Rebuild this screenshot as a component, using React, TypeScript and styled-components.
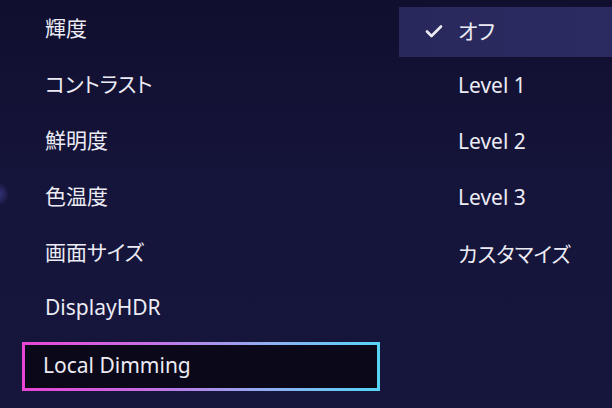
import React from "react";
import styled, { createGlobalStyle } from "styled-components";

const Global = createGlobalStyle`
  html, body { margin: 0; padding: 0; background: #141236; }
  body { font-family: "Noto Sans", "Noto Sans CJK JP", sans-serif; }
`;

const Screen = styled.div`
  position: relative;
  width: 612px;
  height: 408px;
  overflow: hidden;
  display: flex;
  background: linear-gradient(180deg, #110f2f 0%, #15143a 45%, #16153b 100%);
  color: #ecebf4;
  font-size: 21px;
  font-feature-settings: "palt";
`;

const EdgeGlow = styled.div`
  position: absolute;
  left: -12px;
  top: 182px;
  width: 20px;
  height: 24px;
  border-radius: 50%;
  background: radial-gradient(circle, rgba(70, 70, 160, 0.7) 0%, rgba(40, 40, 110, 0) 75%);
`;

const MenuColumn = styled.ul`
  list-style: none;
  margin: 0;
  padding: 0;
  width: 399px;
  display: flex;
  flex-direction: column;
`;

const MenuRow = styled.li`
  height: 56px;
  display: flex;
  align-items: center;
  padding-left: 45px;
  padding-bottom: 2px;
  box-sizing: border-box;
  white-space: nowrap;
`;

const FocusRow = styled.li`
  margin: 6px 0 0 22px;
  width: 358px;
  height: 49px;
  box-sizing: border-box;
  display: flex;
  align-items: center;
  padding: 0 0 3px 18px;
  border: 3px solid;
  border-image: linear-gradient(90deg, #ea46d6 0%, #c770e4 35%, #8fb0f2 70%, #55d4f6 100%) 1;
  background: #0a0819;
  white-space: nowrap;
`;

const OptionColumn = styled.ul`
  list-style: none;
  margin: 0;
  padding: 7px 0 0;
  flex: 1;
  display: flex;
  flex-direction: column;
`;

const OptionRow = styled.li<{ $selected?: boolean }>`
  height: ${(p) => (p.$selected ? "50px" : "56px")};
  display: grid;
  grid-template-columns: 59px 1fr;
  align-items: center;
  background: ${(p) => (p.$selected ? "linear-gradient(90deg, #28285c, #2b2b62)" : "transparent")};
  white-space: nowrap;
  padding-bottom: ${(p) => (p.$selected ? "4px" : "0")};
  box-sizing: border-box;
`;

const CheckSlot = styled.span`
  display: flex;
  justify-content: flex-end;
  padding-right: 15px;
  padding-top: 2px;
`;

const Check = () => (
  <svg width="18" height="14" viewBox="0 0 18 14" fill="none">
    <path d="M2 7.5 L6.5 12 L16 2.5" stroke="#ecebf4" strokeWidth="2.6" strokeLinecap="round" strokeLinejoin="round" />
  </svg>
);

const menu = ["輝度", "コントラスト", "鮮明度", "色温度", "画面サイズ", "DisplayHDR"];
const options = ["Level 1", "Level 2", "Level 3", "カスタマイズ"];

export default function App() {
  return (
    <>
      <Global />
      <Screen>
        <EdgeGlow />
        <MenuColumn>
          {menu.map((m) => (
            <MenuRow key={m}>{m}</MenuRow>
          ))}
          <FocusRow>Local Dimming</FocusRow>
        </MenuColumn>
        <OptionColumn>
          <OptionRow $selected>
            <CheckSlot>
              <Check />
            </CheckSlot>
            <span>オフ</span>
          </OptionRow>
          {options.map((o) => (
            <OptionRow key={o}>
              <span />
              <span>{o}</span>
            </OptionRow>
          ))}
        </OptionColumn>
      </Screen>
    </>
  );
}
